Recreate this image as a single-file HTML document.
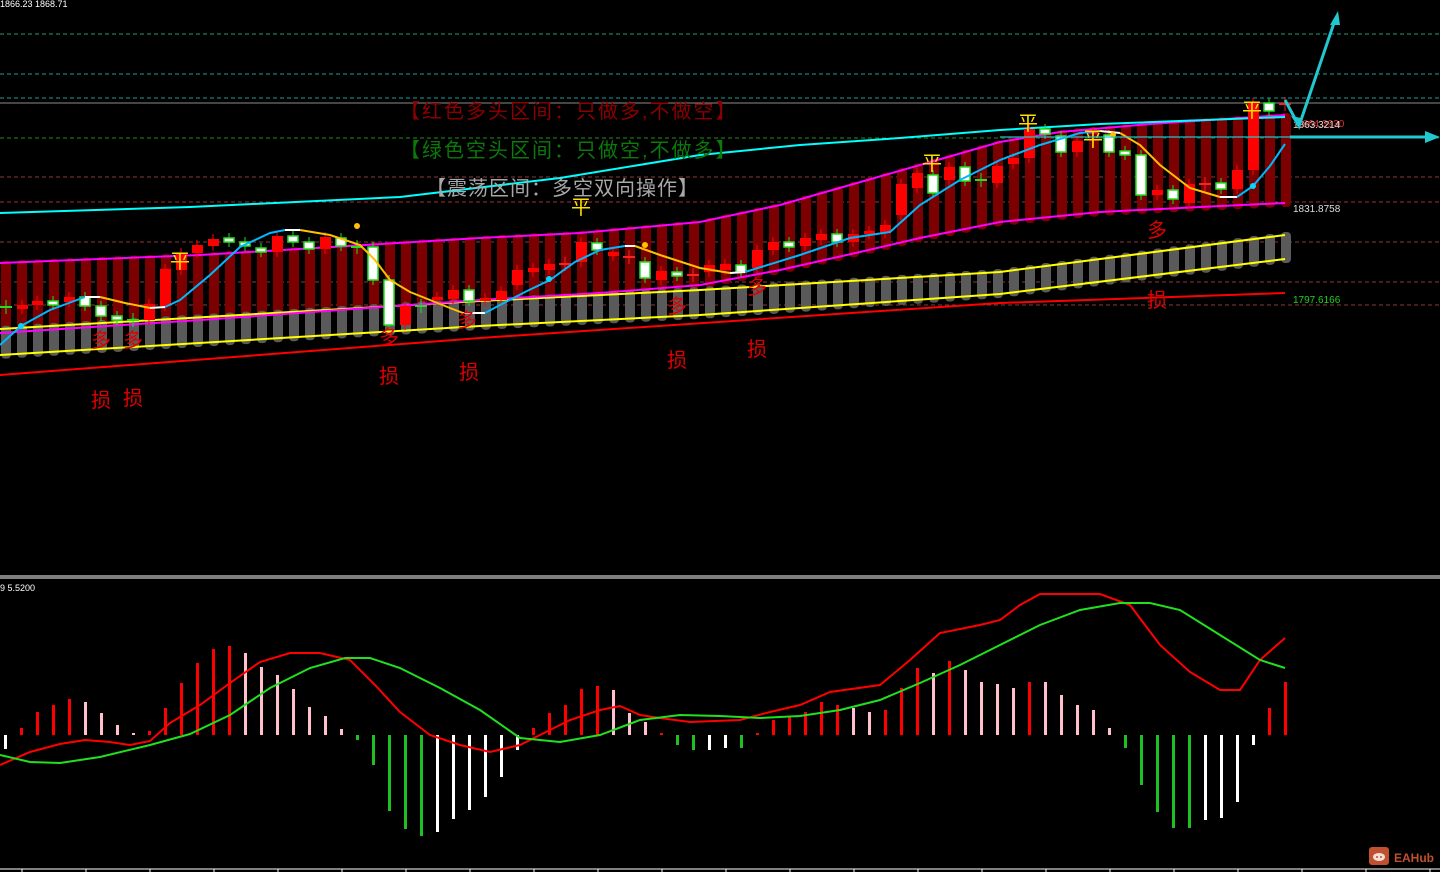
<!DOCTYPE html>
<html><head><meta charset="utf-8"><style>
html,body{margin:0;padding:0;background:#000;width:1440px;height:872px;overflow:hidden}
svg{display:block}
text{font-family:"Liberation Sans","Noto Sans CJK SC",sans-serif}
.cj{font-family:"Noto Sans CJK SC","WenQuanYi Zen Hei",sans-serif}
</style></head><body>
<svg id="s" width="1440" height="872" xmlns="http://www.w3.org/2000/svg">
<rect width="1440" height="872" fill="#000"/>
<g id="grid">
<line x1="0" y1="34" x2="1440" y2="34" stroke="#1f9b7a" stroke-dasharray="4,3"/>
<line x1="0" y1="74" x2="1440" y2="74" stroke="#1a9c9c" stroke-dasharray="4,3"/>
<line x1="0" y1="98" x2="1440" y2="98" stroke="#1a9c9c" stroke-dasharray="4,3"/>
<line x1="0" y1="103" x2="1440" y2="103" stroke="#8a8a8a"/>
<line x1="0" y1="138" x2="1440" y2="138" stroke="#1f8f1f" stroke-dasharray="4,3"/>
<line x1="0" y1="177" x2="1440" y2="177" stroke="#8b3a3a" stroke-dasharray="4,3"/>
<line x1="0" y1="202" x2="1440" y2="202" stroke="#a03030" stroke-dasharray="4,3"/>
<line x1="0" y1="242" x2="1440" y2="242" stroke="#8b3a3a" stroke-dasharray="4,3"/>
<line x1="0" y1="282" x2="1440" y2="282" stroke="#8b3a3a" stroke-dasharray="4,3"/>
<line x1="0" y1="305" x2="1440" y2="305" stroke="#8b3a3a" stroke-dasharray="4,3"/>
</g>
<g id="bands"></g>
<g id="lines"></g>
<g id="candles"></g>
<g id="ma"></g>
<g class="cj" font-size="20" letter-spacing="2">
<text x="400" y="118" fill="#8b0000">【红色多头区间：只做多,不做空】</text>
<text x="400" y="157" fill="#0a7a0a">【绿色空头区间：只做空,不做多】</text>
<text x="426" y="195" fill="#a8a8a8" letter-spacing="1">【震荡区间：多空双向操作】</text>
</g>
<g class="cj" font-size="20" fill="#ffe000" text-anchor="middle">
<text x="180" y="268">平</text><text x="581" y="214">平</text><text x="932" y="170">平</text>
<text x="1028" y="130">平</text><text x="1093" y="146">平</text><text x="1252" y="117">平</text>
</g>
<g class="cj" font-size="20" fill="#e00000" text-anchor="middle">
<text x="101" y="347">多</text><text x="133" y="347">多</text><text x="389" y="344">多</text>
<text x="467" y="327">多</text><text x="677" y="313">多</text><text x="757" y="294">多</text><text x="1157" y="237">多</text>
<text x="101" y="407">损</text><text x="133" y="405">损</text><text x="389" y="383">损</text>
<text x="469" y="379">损</text><text x="677" y="367">损</text><text x="757" y="356">损</text><text x="1157" y="307">损</text>
</g>
<text x="0" y="7" fill="#fff" font-size="9">1866.23 1868.71</text>
<text x="1297" y="127" fill="#e03030" font-size="10">1864.3930</text>
<text x="1293" y="128" fill="#ddd" font-size="10">1863.3214</text>
<text x="1293" y="212" fill="#ddd" font-size="10">1831.8758</text>
<text x="1293" y="303" fill="#20d020" font-size="10">1797.6166</text>
<!-- arrows -->
<line x1="1000" y1="137" x2="1290" y2="137" stroke="#22c8d0" stroke-width="2" opacity="0.6"/>
<line x1="1290" y1="137" x2="1428" y2="137" stroke="#22c8d0" stroke-width="3"/>
<polygon points="1440,137 1425,131 1425,143" fill="#22c8d0"/>
<polyline points="1285,100 1299,126 1335,20" fill="none" stroke="#22c8d0" stroke-width="3"/>
<polygon points="1338,11 1330,25 1340,25" fill="#22c8d0"/>
<polygon points="1299,128 1291,116 1301,118" fill="#22c8d0"/>
<!-- macd panel -->
<line x1="0" y1="576" x2="1440" y2="576" stroke="#fff"/>
<line x1="0" y1="578" x2="1440" y2="578" stroke="#fff"/>
<text x="0" y="591" fill="#fff" font-size="9">9 5.5200</text>
<g id="macd"></g>
<line x1="0" y1="869" x2="1440" y2="869" stroke="#fff"/>
<g id="ticks"></g>
<rect x="1369" y="847" width="20" height="18" rx="3" fill="#c0502f"/>
<ellipse cx="1379" cy="857" rx="6" ry="4" fill="#f0e0d8"/>
<circle cx="1377" cy="857" r="1" fill="#c0502f"/><circle cx="1381" cy="857" r="1" fill="#c0502f"/>
<text x="1394" y="862" fill="#c0502f" font-size="12" font-weight="bold" font-family="Liberation Serif">EAHub</text>
</svg>
<script>
var NS="http://www.w3.org/2000/svg";
function el(g,t,a){var e=document.createElementNS(NS,t);for(var k in a)e.setAttribute(k,a[k]);document.getElementById(g).appendChild(e);return e;}
function interp(p,x){for(var i=0;i<p.length-1;i++){if(x<=p[i+1][0]){var t=(x-p[i][0])/(p[i+1][0]-p[i][0]);return p[i][1]+t*(p[i+1][1]-p[i][1]);}}return p[p.length-1][1];}
function pl(g,p,c,w){el(g,"polyline",{points:p.map(function(q){return q.join(",")}).join(" "),fill:"none",stroke:c,"stroke-width":w||2});}
var mU=[[0,263],[200,255],[480,238],[580,233],[700,222],[780,205],[850,185],[920,165],[1000,142],[1060,132],[1150,124],[1285,115]];
var mL=[[0,333],[200,320],[480,300],[600,293],[700,285],[780,270],[860,252],[920,238],[1000,222],[1100,212],[1200,207],[1285,203]];
var yU=[[0,329],[480,301],[700,290],[1000,272],[1285,235]];
var yL=[[0,355],[480,326],[700,315],[1000,294],[1285,259]];
var rl=[[0,375],[480,338],[1000,303],[1285,293]];
var cy=[[0,213],[190,207],[400,197],[560,178],[700,155],[800,145],[900,138],[1000,130],[1100,124],[1285,117]];
for(var i=0;i<=80;i++){var x=6+16*i;
 var a=interp(mU,x)-2,b=interp(mL,x)+4;el("bands","rect",{x:x-5,y:a,width:10,height:b-a,rx:4,fill:"#7d0000"});
 var c=interp(yU,x)-3,d=interp(yL,x)+4;el("bands","rect",{x:x-5,y:c,width:10,height:d-c,rx:4,fill:"#5a5a5a"});}
pl("lines",rl,"#ff0000");pl("lines",yU,"#ffff00");pl("lines",yL,"#ffff00");
pl("lines",mU,"#ff00ff");pl("lines",mL,"#ff00ff");pl("lines",cy,"#00ffff");
var C=[[6,'c',307],[22,'r',305,309],[37,'r',301,305],[53,'w',301,305],[69,'r',297,302],[85,'w',297,306],[101,'w',306,316],[117,'w',316,320],[133,'c',320],[149,'r',304,320],[165,'r',269,306],[181,'r',253,270],[197,'r',245,253],[213,'r',239,246],[229,'w',238,242],[245,'w',242,246],[261,'w',248,252],[277,'r',236,252],[293,'w',236,242],[309,'w',242,249],[325,'r',237,249],[341,'w',238,246],[357,'c',247],[373,'w',247,280],[389,'w',280,325],[405,'r',306,325],[421,'c',306],[437,'r',297,300],[453,'r',290,299],[469,'w',290,301],[485,'r',298,301],[501,'r',291,300],[517,'r',270,285],[533,'r',268,272],[549,'r',264,270],[565,'c',264],[581,'r',242,262],[597,'w',243,250],[613,'r',252,256],[629,'c',257],[645,'w',262,278],[661,'r',271,280],[677,'w',272,276],[693,'c',275],[709,'r',265,272],[725,'r',264,270],[741,'w',265,272],[757,'r',250,268],[773,'r',242,250],[789,'w',242,247],[805,'r',238,246],[821,'r',234,240],[837,'w',234,242],[853,'r',234,242],[869,'r',231,234],[885,'r',225,233],[901,'r',184,215],[917,'r',173,188],[933,'w',175,193],[949,'r',167,180],[965,'w',167,181],[981,'c',180],[997,'r',166,183],[1013,'r',158,164],[1029,'r',129,158],[1045,'w',129,134],[1061,'w',136,152],[1077,'r',141,152],[1093,'r',132,134],[1109,'w',135,152],[1125,'w',151,155],[1141,'w',155,195],[1157,'r',190,195],[1173,'w',190,199],[1189,'r',184,203],[1205,'c',184],[1221,'w',183,189],[1237,'r',170,189],[1253,'r',103,170],[1269,'w',103,111],[1285,'c',104]];
C.forEach(function(k){var x=k[0];
 if(k[1]=='c'){var col=x>1000&&x<1290||x>560&&x<700?"#ff2020":"#20e020";el("candles","line",{x1:x,y1:k[2]-7,x2:x,y2:k[2]+7,stroke:col});el("candles","line",{x1:x-6,y1:k[2],x2:x+6,y2:k[2],stroke:col,"stroke-width":2});return;}
 if(k[1]=='r'){el("candles","line",{x1:x,y1:k[2]-5,x2:x,y2:k[3]+5,stroke:"#ff0000"});el("candles","rect",{x:x-5,y:k[2],width:11,height:Math.max(2,k[3]-k[2]),fill:"#ff0000"});}
 else{el("candles","line",{x1:x,y1:k[2]-5,x2:x,y2:k[3]+5,stroke:"#20e020"});el("candles","rect",{x:x-5,y:k[2],width:10,height:Math.max(2,k[3]-k[2]),fill:"#fff",stroke:"#20e020","stroke-width":1.5});}
});
pl("ma",[[0,345],[21,326],[50,310],[85,297]],"#00b8ff");pl("ma",[[85,297],[100,297]],"#fff");
pl("ma",[[100,297],[125,303],[150,308]],"#ffc000");pl("ma",[[150,308],[165,307]],"#fff");
pl("ma",[[165,307],[180,300],[210,275],[240,247],[270,233],[285,230]],"#00b8ff");pl("ma",[[285,230],[300,230]],"#fff");
pl("ma",[[300,230],[330,235],[360,245],[375,260],[390,280],[410,292],[430,300],[450,308],[463,313]],"#ffc000");pl("ma",[[463,313],[485,313]],"#fff");
pl("ma",[[485,313],[500,305],[525,292],[550,280],[575,262],[600,250],[625,246]],"#00b8ff");pl("ma",[[625,246],[635,246]],"#fff");
pl("ma",[[635,246],[660,255],[700,268],[730,273]],"#ffc000");pl("ma",[[730,273],[745,272]],"#fff");
pl("ma",[[745,272],[800,255],[850,238],[890,232],[920,205],[960,180],[1000,160],[1040,145],[1080,133],[1100,131]],"#00b8ff");pl("ma",[[1100,131],[1120,133]],"#fff");
pl("ma",[[1120,133],[1140,145],[1160,165],[1190,188],[1220,197]],"#ffc000");pl("ma",[[1220,197],[1237,197]],"#fff");
pl("ma",[[1237,197],[1253,186],[1270,166],[1285,144]],"#00b8ff");
[[357,226,"#ffc000"],[645,245,"#ffc000"],[1113,135,"#ffc000"],[21,326,"#00d8ff"],[549,279,"#00d8ff"],[1253,186,"#00d8ff"]].forEach(function(d){el("ma","circle",{cx:d[0],cy:d[1],r:3,fill:d[2]});});
var H=[['w',749],['r',728],['r',712],['r',705],['r',699],['p',702],['p',713],['p',725],['p',733],['r',731],['r',708],['r',683],['r',663],['r',649],['r',646],['p',653],['p',667],['p',675],['p',689],['p',707],['p',716],['p',729],['g',740],['g',765],['g',811],['g',829],['g',836],['w',832],['w',819],['w',810],['w',797],['w',777],['w',750],['r',728],['r',713],['r',705],['r',689],['r',686],['p',690],['p',713],['p',722],['r',733],['g',745],['g',750],['w',750],['w',748],['g',748],['r',733],['r',720],['r',716],['r',712],['r',702],['r',705],['p',708],['p',712],['r',710],['r',688],['r',668],['p',673],['r',661],['p',670],['p',682],['p',684],['p',688],['r',682],['p',682],['p',695],['p',705],['p',710],['p',728],['g',748],['g',785],['g',812],['g',828],['g',828],['w',820],['w',818],['w',802],['w',745],['r',708],['r',682]];
var cols={r:"#ff0000",p:"#ffc0cb",g:"#20c020",w:"#ffffff"};
H.forEach(function(h,i){var x=5+16*i,y=h[1],t=Math.min(y,735),b=Math.max(y,735);el("macd","rect",{x:x-1,y:t,width:3,height:Math.max(1,b-t),fill:cols[h[0]]});});
pl("macd",[[0,765],[30,752],[60,744],[85,740],[110,742],[130,745],[150,741],[170,723],[200,705],[230,683],[260,662],[290,653],[320,653],[350,660],[375,685],[400,712],[430,735],[460,745],[490,752],[520,745],[540,735],[570,720],[600,710],[620,706],[640,715],[660,718],[690,722],[740,720],[770,712],[800,705],[830,692],[880,685],[910,660],[940,633],[980,625],[1000,620],[1020,605],[1040,594],[1100,594],[1130,605],[1160,645],[1190,672],[1220,690],[1240,690],[1260,660],[1285,638]],"#ff0000");
pl("macd",[[0,755],[30,762],[60,763],[100,757],[150,745],[190,734],[230,715],[270,688],[310,668],[345,658],[370,658],[400,668],[440,688],[480,710],[520,738],[560,742],[600,735],[640,720],[680,715],[720,716],[760,718],[800,716],[840,710],[880,700],[920,683],[960,665],[1000,645],[1040,625],[1080,610],[1120,603],[1150,603],[1180,610],[1220,635],[1260,660],[1285,668]],"#20e020");
for(var x=22;x<1440;x+=64)el("ticks","line",{x1:x,y1:869,x2:x,y2:872,stroke:"#fff"});
</script>
</body></html>
